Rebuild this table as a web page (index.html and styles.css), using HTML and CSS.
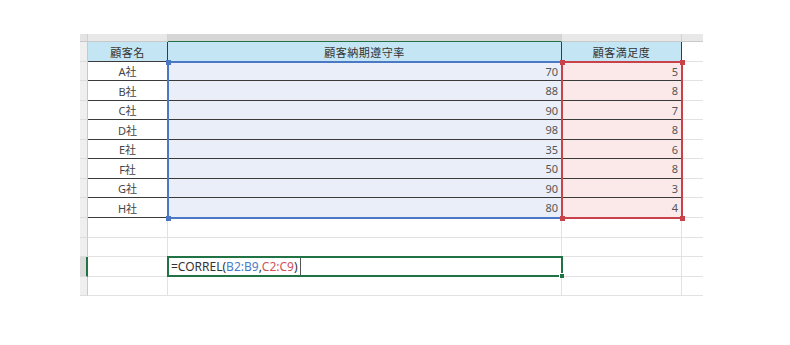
FILE: index.html
```html
<!DOCTYPE html>
<html lang="ja">
<head>
<meta charset="utf-8">
<link rel="stylesheet" href="styles.css">
</head>
<body>
<div class="sheet">
  <div class="corner"></div>
  <div class="colhdr"></div>
  <div class="colhdr active"></div>
  <div class="colhdr"></div>
  <div class="colhdr last"></div>

  <div class="rowhdr"></div>
  <div class="c t th">顧客名</div>
  <div class="c t th">顧客納期遵守率</div>
  <div class="c t th">顧客満足度</div>
  <div class="c d"></div>

  <div class="rowhdr"></div><div class="c t name">A社</div><div class="c t num b">70</div><div class="c t num r">5</div><div class="c d"></div>
  <div class="rowhdr"></div><div class="c t name">B社</div><div class="c t num b">88</div><div class="c t num r">8</div><div class="c d"></div>
  <div class="rowhdr"></div><div class="c t name">C社</div><div class="c t num b">90</div><div class="c t num r">7</div><div class="c d"></div>
  <div class="rowhdr"></div><div class="c t name">D社</div><div class="c t num b">98</div><div class="c t num r">8</div><div class="c d"></div>
  <div class="rowhdr"></div><div class="c t name">E社</div><div class="c t num b">35</div><div class="c t num r">6</div><div class="c d"></div>
  <div class="rowhdr"></div><div class="c t name">F社</div><div class="c t num b">50</div><div class="c t num r">8</div><div class="c d"></div>
  <div class="rowhdr"></div><div class="c t name">G社</div><div class="c t num b">90</div><div class="c t num r">3</div><div class="c d"></div>
  <div class="rowhdr"></div><div class="c t name">H社</div><div class="c t num b">80</div><div class="c t num r">4</div><div class="c d"></div>

  <div class="rowhdr"></div><div class="c"></div><div class="c"></div><div class="c"></div><div class="c d"></div>
  <div class="rowhdr"></div><div class="c"></div><div class="c"></div><div class="c"></div><div class="c d"></div>
  <div class="rowhdr act"></div><div class="c"></div>
  <div class="c formula"><span class="fx">=CORREL(</span><span class="rb">B2:B9</span><span class="fx">,</span><span class="rr">C2:C9</span><span class="fx">)</span><span class="caret"></span></div>
  <div class="c"></div><div class="c d"></div>
  <div class="rowhdr"></div><div class="c"></div><div class="c"></div><div class="c"></div><div class="c d"></div>

  <div class="range blue"></div>
  <div class="range red"></div>
  <div class="hd hb h1"></div>
  <div class="hd hb h2"></div>
  <div class="hd hr h3"></div>
  <div class="hd hr h4"></div>
  <div class="hd hr h5"></div>
  <div class="hd hr h6"></div>
  <div class="activecell"></div>
  <div class="fill"></div>
</div>
</body>
</html>
```

FILE: styles.css
```css
html, body {
  margin: 0;
  background: #ffffff;
}
body {
  font-family: "Noto Sans", "Noto Sans CJK JP", sans-serif;
  font-size: 11px;
  color: #3a3a3a;
}
.sheet {
  position: relative;
  display: grid;
  grid-template-columns: 8px 80px 394px 120px 21px;
  grid-template-rows: 8px 20px 19px 20px 19px 20px 19px 20px 19px 20px 20px 19px 20px 19px;
  margin: 34px 0 0 80px;
  width: 623px;
}
.sheet > div {
  box-sizing: border-box;
}
.corner {
  background: #e3e3e3;
  border-right: 1px solid #d0d0d0;
  border-bottom: 1px solid #c8c8c8;
}
.colhdr {
  background: #e8e8e8;
  border-right: 1px solid #d2d2d2;
  border-bottom: 1px solid #c8c8c8;
}
.colhdr.active {
  background: #d6d6d6;
  border-bottom: 1px solid #217346;
}
.colhdr.last {
  border-right: none;
}
.rowhdr {
  background: #efefef;
  border-right: 1px solid #c8c8c8;
  border-bottom: 1px solid #dedede;
}
.rowhdr.act {
  background: #dadada;
  border-right: 2px solid #217346;
}
.c {
  border-right: 1px solid #e2e2e2;
  border-bottom: 1px solid #e2e2e2;
  display: flex;
  align-items: center;
  white-space: nowrap;
  overflow: hidden;
}
.c.d {
  border-right: none;
}
.c.t {
  border-right: 1px solid #3a3a3a;
  border-bottom: 1px solid #3a3a3a;
}
.th {
  background: #c3e5f4;
  justify-content: center;
  color: #333;
  letter-spacing: 0.5px;
}
.name {
  justify-content: center;
  color: #444;
}
.num {
  justify-content: flex-end;
  padding-right: 3px;
  color: #555;
}
.num.b {
  background: #e9eef9;
}
.num.r {
  background: #fbe9e9;
}
.formula {
  padding-left: 3px;
  font-size: 12px;
  color: #333;
}
.rb { color: #4a7bc9; }
.rr { color: #d0525a; }
.caret {
  display: inline-block;
  width: 1px;
  height: 17px;
  background: #555;
  margin-left: 2px;
}
.range {
  position: absolute;
  box-sizing: border-box;
}
.range.blue {
  left: 87px;
  top: 27px;
  width: 396px;
  height: 158px;
  border: 2px solid #4a78c4;
}
.range.red {
  left: 481px;
  top: 27px;
  width: 122px;
  height: 158px;
  border: 2px solid #c9424a;
}
.hd {
  position: absolute;
  width: 5px;
  height: 5px;
}
.hb { background: #4a78c4; }
.hr { background: #c9424a; }
.h1 { left: 86px; top: 26px; }
.h2 { left: 86px; top: 182px; }
.h3 { left: 480px; top: 26px; }
.h4 { left: 480px; top: 182px; }
.h5 { left: 600px; top: 26px; }
.h6 { left: 600px; top: 182px; }
.activecell {
  position: absolute;
  left: 87px;
  top: 222px;
  width: 396px;
  height: 21px;
  border: 2px solid #217346;
  box-sizing: border-box;
}
.fill {
  position: absolute;
  left: 479px;
  top: 239px;
  width: 5px;
  height: 5px;
  background: #217346;
  border: 1px solid #fff;
  border-right: none;
  border-bottom: none;
}
```
